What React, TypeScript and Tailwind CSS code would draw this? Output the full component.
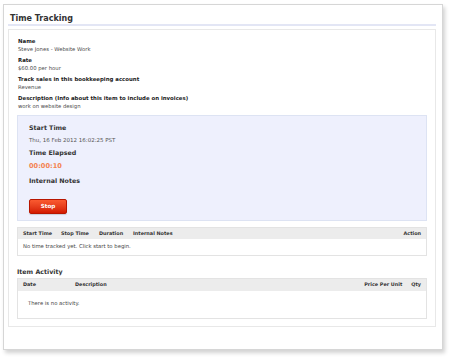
import React from 'react';

function Field({ label, value }: { label: string; value: string }) {
  return (
    <div className="mb-[4px] pl-[1px]">
      <div className="h-[7.5px] text-[5.4px] leading-[7.5px] font-bold text-[#222]">{label}</div>
      <div className="h-[7.5px] text-[5.3px] leading-[7.5px] text-[#4a4a4a]">{value}</div>
    </div>
  );
}

export default function App() {
  return (
    <div className="h-[358px] w-[449px] bg-white pt-[4px] pl-[3px] font-['DejaVu_Sans',sans-serif] text-[#333]">
      {/* Outer panel */}
      <div className="h-[346px] w-[440px] border border-[#d6d6d6] bg-white px-[4px] pr-[6px] pt-[8px] shadow-[2px_3px_4px_rgba(0,0,0,0.18)]">
        <div className="border-b-2 border-[#e3e6f5] pl-[2px]">
          <h1 className="h-[11px] text-[8px] leading-[11px] font-bold text-[#333]">Time Tracking</h1>
        </div>

        {/* Inner card */}
        <div className="mt-[3px] h-[298px] border border-[#e8e8e8] px-[8px] pt-[8px]">
          <Field label="Name" value="Steve Jones - Website Work" />
          <Field label="Rate" value="$60.00 per hour" />
          <Field label="Track sales in this bookkeeping account" value="Revenue" />
          <Field label="Description (Info about this item to include on invoices)" value="work on website design" />

          {/* Timer box */}
          <div className="mt-[5px] h-[106px] border border-[#dde3f3] bg-[#eef0fd] pl-[11px] pt-[7.5px]">
            <div className="h-[8px] text-[6.3px] leading-[8px] font-bold text-[#333]">Start Time</div>
            <div className="mt-[5.7px] h-[7px] text-[5.5px] leading-[7px] text-[#555]">Thu, 16 Feb 2012 16:02:25 PST</div>
            <div className="mt-[4.5px] h-[8px] text-[6.3px] leading-[8px] font-bold text-[#333]">Time Elapsed</div>
            <div className="mt-[5.8px] h-[9px] text-[6.6px] leading-[9px] font-bold text-[#f4814f]">00:00:10</div>
            <div className="mt-[5.8px] h-[8px] text-[6.3px] leading-[8px] font-bold text-[#333]">Internal Notes</div>
            <button className="mt-[14px] flex h-[14.5px] w-[38px] items-center justify-center rounded-[2px] border border-[#b81600] bg-gradient-to-b from-[#fa5a30] to-[#d41800] text-[5.6px] font-bold text-white shadow-[0_1px_1px_rgba(0,0,0,0.15)]">
              Stop
            </button>
          </div>

          {/* Time table */}
          <div className="mt-[6px] border border-[#e3e3e3]">
            <div className="flex h-[11px] items-center bg-[#ececec] pl-[5px] pr-[5px] text-[4.9px] font-bold text-[#333]">
              <div className="w-[38px]">Start Time</div>
              <div className="w-[38px]">Stop Time</div>
              <div className="w-[34px]">Duration</div>
              <div className="flex-1">Internal Notes</div>
              <div>Action</div>
            </div>
            <div className="flex h-[16px] items-center bg-white pl-[5px] text-[5.3px] text-[#444]">
              No time tracked yet. Click start to begin.
            </div>
          </div>

          {/* Item activity */}
          <div className="mt-[12px] h-[8px] text-[6.3px] leading-[8px] font-bold text-[#333]">Item Activity</div>
          <div className="mt-[2px] border border-[#e3e3e3]">
            <div className="flex h-[11.5px] items-center bg-[#ececec] pl-[5px] pr-[5px] text-[4.9px] font-bold text-[#333]">
              <div className="w-[52px]">Date</div>
              <div className="flex-1">Description</div>
              <div>Price Per Unit</div>
              <div className="ml-[9px]">Qty</div>
            </div>
            <div className="flex h-[27px] items-center bg-white pl-[10px] text-[5.3px] text-[#444]">
              There is no activity.
            </div>
          </div>
        </div>
      </div>
    </div>
  );
}
